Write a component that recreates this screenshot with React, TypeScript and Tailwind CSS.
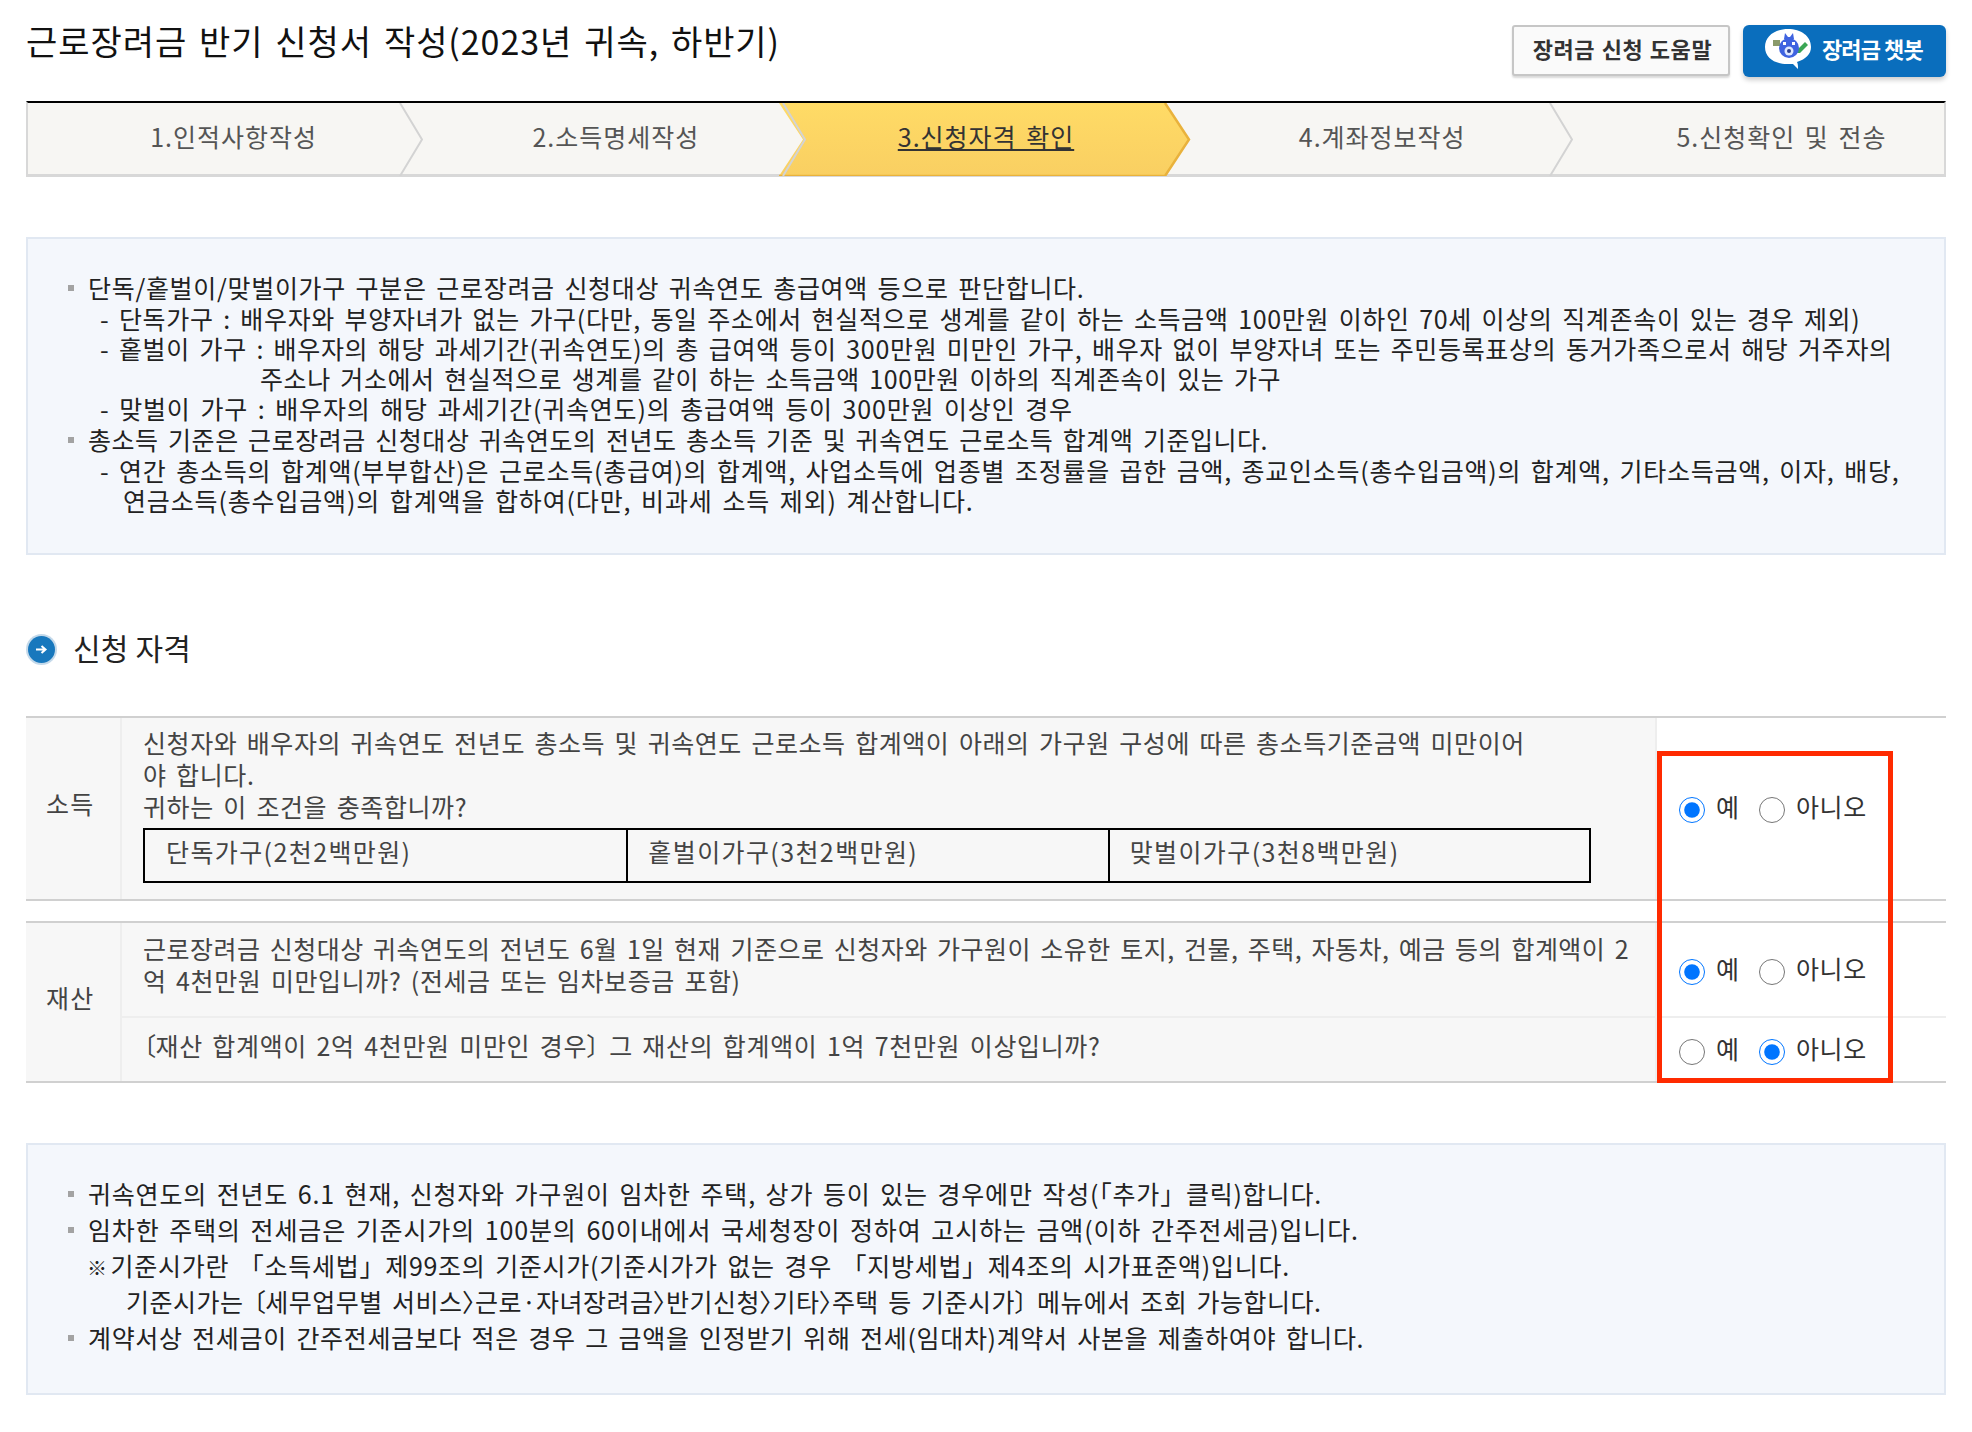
import React from "react";

const FONT = "font-['Noto_Sans_CJK_KR','Noto_Sans',sans-serif]";

function Bullet() {
  return <span className="absolute left-[-20px] top-[14px] w-[6px] h-[6px] bg-[#a3a3a3]" />;
}

function K({ children }: { children: React.ReactNode }) {
  return <span className="[font-feature-settings:'palt'] tracking-[0px]">{children}</span>;
}

function Li({ children, className = "" }: { children: React.ReactNode; className?: string }) {
  return (
    <div className={`relative whitespace-nowrap h-[32px] leading-[32px] ${className}`}>
      <Bullet />
      {children}
    </div>
  );
}

function Line({ children, className = "" }: { children: React.ReactNode; className?: string }) {
  return <div className={`whitespace-nowrap h-[30px] leading-[30px] ${className}`}>{children}</div>;
}

function Step({ label, active, pl, last }: { label: string; active?: boolean; pl: string; last?: boolean }) {
  return (
    <div className={`relative min-w-0 h-full flex items-center justify-center pb-[5px] ${pl}`}>
      {active && (
        <svg className="absolute left-[-15px] top-0 h-[73px] w-[412px]" viewBox="0 0 412 73" preserveAspectRatio="none">
          <defs>
            <linearGradient id="yg" x1="0" y1="0" x2="0" y2="1">
              <stop offset="0" stopColor="#ffdb66" />
              <stop offset="1" stopColor="#f9cf62" />
            </linearGradient>
          </defs>
          <path d="M0 0H386L410 36.5L386 73H0L24 36.5Z" fill="url(#yg)" />
          <path d="M386 0L410 36.5L386 73H0" fill="none" stroke="#e9b23c" strokeWidth="2.5" />
        </svg>
      )}
      <span className={`relative text-[25px] leading-[30px] tracking-[1px] [word-spacing:3px] whitespace-nowrap ${active ? "underline text-[#333]" : "text-[#555]"}`}>{label}</span>
      {!last && !active && (
        <svg className="absolute right-[-12px] top-0 h-[73px] w-[24px] z-10" viewBox="0 0 24 73" preserveAspectRatio="none">
          <path d="M1 0L23 36.5L1 73" fill="none" stroke="#d3d3d3" strokeWidth="2" />
        </svg>
      )}
    </div>
  );
}

function RadioPair({ name, yes }: { name: string; yes: boolean }) {
  return (
    <div className="flex items-center pl-[22px] text-[#333] text-[25px]">
      <input type="radio" name={name} defaultChecked={yes} className="w-[26px] h-[26px] m-0 mt-[3px] shrink-0" />
      <span className="ml-[11px] w-[43px] leading-[30px] mb-[6px]">예</span>
      <input type="radio" name={name} defaultChecked={!yes} className="w-[26px] h-[26px] m-0 mt-[3px] shrink-0" />
      <span className="ml-[11px] leading-[30px] mb-[6px]">아니오</span>
    </div>
  );
}

function ChatbotIcon() {
  return (
    <svg width="50" height="42" viewBox="0 0 50 42" className="shrink-0">
      <path d="M25 2C12 2 2 9 2 20s10 17 22 17c3 0 5 0 6 0l5 5c0-3 0-5-1-7 9-3 14-8 14-15C48 9 38 2 25 2Z" fill="#fff" />
      <rect x="10" y="13" width="7" height="6" fill="#8a9a6b" />
      <path d="M35 22l7-7 3 3-8 8-3 0Z" fill="#3aa655" />
      <circle cx="26" cy="21" r="10" fill="#3f63e0" />
      <path d="M21 12l1-6 3 4h2l3-4 1 6Z" fill="#3f63e0" />
      <circle cx="26" cy="24" r="4.5" fill="#dfe8ff" />
      <circle cx="26" cy="24" r="2" fill="#2c3f8f" />
      <rect x="20" y="15" width="3" height="3" fill="#fff" />
      <rect x="29" y="15" width="3" height="3" fill="#fff" />
    </svg>
  );
}

function SectionIcon() {
  return (
    <svg width="31" height="31" viewBox="0 0 31 31" className="shrink-0">
      <circle cx="15.5" cy="15.5" r="15.5" fill="#c4d9ea" />
      <circle cx="15.5" cy="15.5" r="13.5" fill="#1878bd" />
      <path d="M10 15.5h9M15.5 12l4 3.5-4 3.5" fill="none" stroke="#fff" strokeWidth="2" />
    </svg>
  );
}

export default function App() {
  return (
    <div className={`${FONT} w-[1972px] h-[1432px] bg-white px-[26px] text-[#222] text-[25px] tracking-[0.6px] [word-spacing:3.3px] flex flex-col`}>
      <header className="h-[101px] flex justify-between shrink-0">
        <h1 className="text-[34px] font-normal leading-[40px] mt-[21px] tracking-[0.95px] text-[#111] whitespace-nowrap">근로장려금 반기 신청서 작성(2023년 귀속, 하반기)</h1>
        <div className="flex gap-[13px] mt-[25px]">
          <button className="w-[218px] h-[51px] pb-[4px] pl-[3px] bg-[#fafafa] border-2 border-[#c6c6c6] rounded-[3px] text-[22px] tracking-[0.55px] [word-spacing:1px] font-bold text-[#333] shadow-[0_2px_2px_rgba(0,0,0,0.15)] whitespace-nowrap">장려금 신청 도움말</button>
          <button className="w-[203px] h-[52px] pb-[6px] bg-[#0a6ebd] rounded-[6px] text-[22px] tracking-[-0.9px] [word-spacing:0px] font-bold text-white shadow-[0_3px_5px_rgba(0,0,0,0.2)] flex items-center pl-[20px] gap-[9px] whitespace-nowrap">
            <ChatbotIcon />
            장려금 챗봇
          </button>
        </div>
      </header>

      <nav className="h-[76px] border-t-[2px] border-t-black border-b-[3px] border-b-[#d8d8d8] border-x-2 border-x-[#d8d8d8] bg-[#f7f6f3] grid grid-cols-5 shrink-0">
        <Step label="1.인적사항작성" pl="pl-[28px]" />
        <Step label="2.소득명세작성" pl="pl-[26px]" />
        <Step label="3.신청자격 확인" active pl="" />
        <Step label="4.계좌정보작성" pl="pl-[26px]" />
        <Step label="5.신청확인 및 전송" pl="pl-[58px]" last />
      </nav>

      <section className="mt-[60px] h-[318px] shrink-0 border-2 border-[#e1e8f2] bg-[#f4f7fc] pl-[60px] pt-[32px]">
        <Li className="tracking-[0.7px]">단독/홑벌이/맞벌이가구 구분은 근로장려금 신청대상 귀속연도 총급여액 등으로 판단합니다.</Li>
        <Line className="pl-[12px] tracking-[0.67px]">- 단독가구 : 배우자와 부양자녀가 없는 가구(다만, 동일 주소에서 현실적으로 생계를 같이 하는 소득금액 100만원 이하인 70세 이상의 직계존속이 있는 경우 제외)</Line>
        <Line className="pl-[12px] tracking-[0.67px]">- 홑벌이 가구 : 배우자의 해당 과세기간(귀속연도)의 총 급여액 등이 300만원 미만인 가구, 배우자 없이 부양자녀 또는 주민등록표상의 동거가족으로서 해당 거주자의</Line>
        <Line className="pl-[172px]">주소나 거소에서 현실적으로 생계를 같이 하는 소득금액 100만원 이하의 직계존속이 있는 가구</Line>
        <Line className="pl-[12px] tracking-[0.82px]">- 맞벌이 가구 : 배우자의 해당 과세기간(귀속연도)의 총급여액 등이 300만원 이상인 경우</Line>
        <Li className="tracking-[0.54px]">총소득 기준은 근로장려금 신청대상 귀속연도의 전년도 총소득 기준 및 귀속연도 근로소득 합계액 기준입니다.</Li>
        <Line className="pl-[12px] tracking-[0.75px]">- 연간 총소득의 합계액(부부합산)은 근로소득(총급여)의 합계액, 사업소득에 업종별 조정률을 곱한 금액, 종교인소득(총수입금액)의 합계액, 기타소득금액, 이자, 배당,</Line>
        <Line className="pl-[35px] tracking-[0.85px]">연금소득(총수입금액)의 합계액을 합하여(다만, 비과세 소득 제외) 계산합니다.</Line>
      </section>

      <div className="mt-[78px] h-[32px] flex items-center gap-[16px] shrink-0">
        <SectionIcon />
        <h2 className="text-[30px] font-normal text-[#222] leading-[32px] tracking-[0.2px] [word-spacing:0px] mb-[4px]">신청 자격</h2>
      </div>

      <div className="relative mt-[51px] text-[#444] shrink-0">
        <div className="flex h-[185px] border-y-2 border-[#d0d0d0]">
          <div className="w-[96px] bg-[#f7f7f7] border-r-2 border-[#eeeeee] flex items-center pl-[20px] pb-[10px] shrink-0 tracking-[1.2px]">소득</div>
          <div className="w-[1535px] bg-[#f7f7f7] pl-[21px] pt-[8px] border-r-2 border-[#eeeeee] shrink-0">
            <div className="h-[32px] leading-[32px] whitespace-nowrap tracking-[0.57px]">신청자와 배우자의 귀속연도 전년도 총소득 및 귀속연도 근로소득 합계액이 아래의 가구원 구성에 따른 총소득기준금액 미만이어</div>
            <div className="h-[32px] leading-[32px] whitespace-nowrap">야 합니다.</div>
            <div className="h-[32px] leading-[32px] whitespace-nowrap">귀하는 이 조건을 충족합니까?</div>
            <div className="mt-[6px] w-[1448px] h-[55px] border-2 border-black grid grid-cols-3 tracking-[1.4px]">
              <div className="pl-[21px] pt-[5px] leading-[32px]">단독가구(2천2백만원)</div>
              <div className="pl-[20px] pt-[5px] leading-[32px] border-l-2 border-black">홑벌이가구(3천2백만원)</div>
              <div className="pl-[20px] pt-[5px] leading-[32px] border-l-2 border-black">맞벌이가구(3천8백만원)</div>
            </div>
          </div>
          <div className="flex-1 flex items-center">
            <RadioPair name="r1" yes />
          </div>
        </div>

        <div className="flex mt-[20px] h-[162px] border-y-2 border-[#d0d0d0]">
          <div className="w-[96px] bg-[#f7f7f7] border-r-2 border-[#eeeeee] flex items-center pl-[20px] pb-[8px] shrink-0 tracking-[1.2px]">재산</div>
          <div className="flex-1 flex flex-col">
            <div className="h-[95px] flex border-b-2 border-[#eeeeee]">
              <div className="w-[1535px] bg-[#f7f7f7] pl-[21px] pt-[9px] border-r-2 border-[#eeeeee] shrink-0">
                <div className="h-[32px] leading-[32px] whitespace-nowrap tracking-[0.48px]">근로장려금 신청대상 귀속연도의 전년도 6월 1일 현재 기준으로 신청자와 가구원이 소유한 토지, 건물, 주택, 자동차, 예금 등의 합계액이 2</div>
                <div className="h-[32px] leading-[32px] whitespace-nowrap">억 4천만원 미만입니까? (전세금 또는 임차보증금 포함)</div>
              </div>
              <div className="flex-1 flex items-center pt-[2px]">
                <RadioPair name="r2" yes />
              </div>
            </div>
            <div className="flex-1 flex">
              <div className="w-[1535px] bg-[#f7f7f7] pl-[21px] pt-[11px] border-r-2 border-[#eeeeee] shrink-0">
                <div className="h-[32px] leading-[32px] whitespace-nowrap tracking-[0.65px]"><K>〔</K>재산 합계액이 2억 4천만원 미만인 경우<K>〕</K> 그 재산의 합계액이 1억 7천만원 이상입니까?</div>
              </div>
              <div className="flex-1 flex items-center pt-[2px]">
                <RadioPair name="r3" yes={false} />
              </div>
            </div>
          </div>
        </div>

        <div className="absolute left-[1631px] top-[35px] w-[236px] h-[332px] border-[5px] border-[#ff2a00] pointer-events-none" />
      </div>

      <section className="mt-[60px] h-[252px] shrink-0 border-2 border-[#e1e8f2] bg-[#f4f7fc] pl-[60px] pt-[30px]">
        <div className="relative h-[36px] leading-[36px] whitespace-nowrap tracking-[0.8px]">
          <span className="absolute left-[-20px] top-[16px] w-[6px] h-[6px] bg-[#a3a3a3]" />
          귀속연도의 전년도 6.1 현재, 신청자와 가구원이 임차한 주택, 상가 등이 있는 경우에만 작성(「추가」클릭)합니다.
        </div>
        <div className="relative h-[36px] leading-[36px] whitespace-nowrap tracking-[0.85px]">
          <span className="absolute left-[-20px] top-[16px] w-[6px] h-[6px] bg-[#a3a3a3]" />
          임차한 주택의 전세금은 기준시가의 100분의 60이내에서 국세청장이 정하여 고시하는 금액(이하 간주전세금)입니다.
        </div>
        <div className="relative h-[36px] leading-[36px] whitespace-nowrap tracking-[0.72px]">
          <span className="text-[20px] tracking-[0px] [word-spacing:0px] mr-[-6px] ml-[-1px]">※</span> 기준시가란 「소득세법」제99조의 기준시가(기준시가가 없는 경우 「지방세법」제4조의 시가표준액)입니다.
        </div>
        <div className="relative h-[36px] leading-[36px] whitespace-nowrap pl-[38px] tracking-[0.48px]">
          기준시가는 <K>〔</K>세무업무별 서비스<K>〉</K>근로<K>·</K>자녀장려금<K>〉</K>반기신청<K>〉</K>기타<K>〉</K>주택 등 기준시가<K>〕</K> 메뉴에서 조회 가능합니다.
        </div>
        <div className="relative h-[36px] leading-[36px] whitespace-nowrap tracking-[0.66px]">
          <span className="absolute left-[-20px] top-[16px] w-[6px] h-[6px] bg-[#a3a3a3]" />
          계약서상 전세금이 간주전세금보다 적은 경우 그 금액을 인정받기 위해 전세(임대차)계약서 사본을 제출하여야 합니다.
        </div>
      </section>
    </div>
  );
}
